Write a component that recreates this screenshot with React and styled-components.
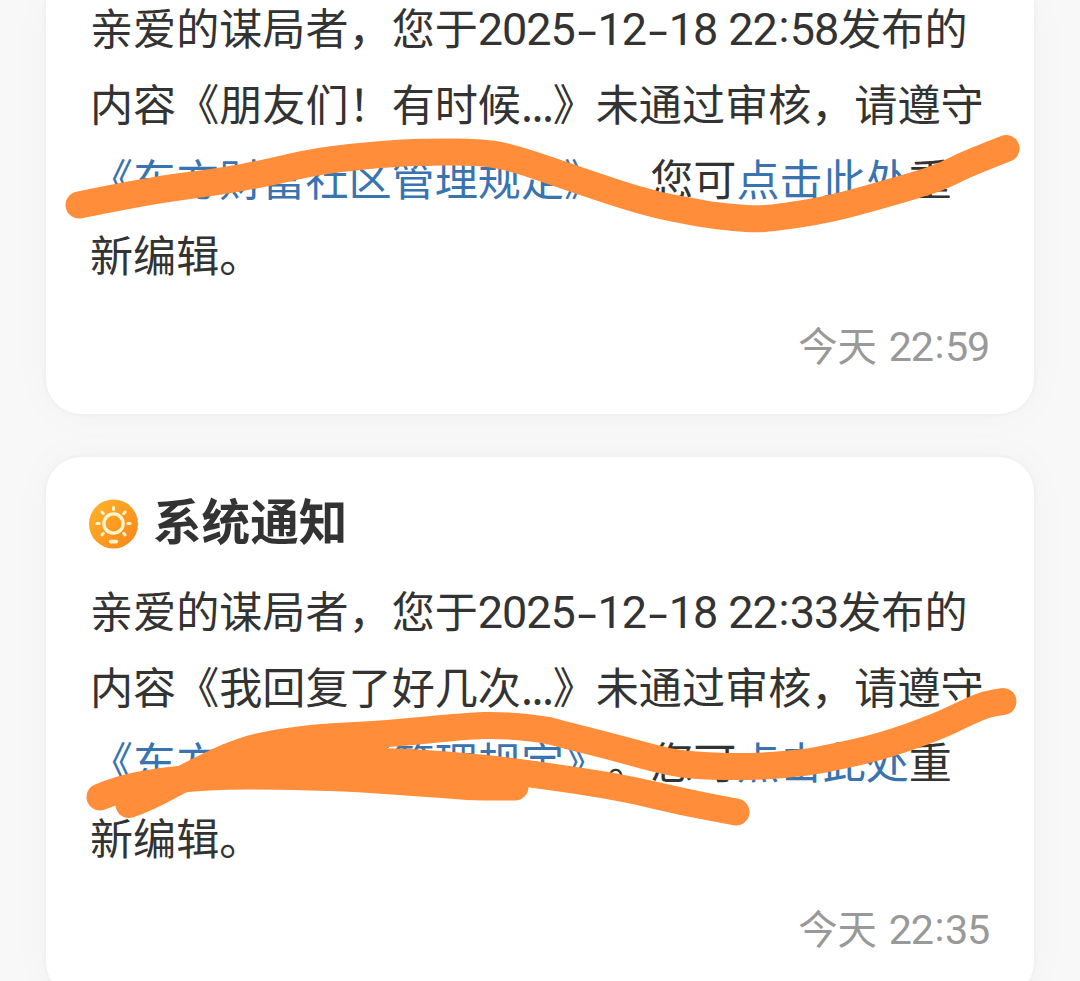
import React from 'react';
import styled, { createGlobalStyle } from 'styled-components';

const GlobalStyle = createGlobalStyle`
    * {
        box-sizing: border-box;
    }

    body {
        margin: 0;
        overflow: hidden;
        background: #f8f8f8;
        font-family: "Noto Sans CJK SC", sans-serif;
        text-spacing-trim: space-all;
    }
`;

const Feed = styled.main`
    position: relative;
    width: 1080px;
    height: 981px;
    padding: 0 46px;
    display: flex;
    flex-direction: column;
    gap: 43px;
    overflow: hidden;
`;

const Card = styled.article`
    flex: none;
    display: flex;
    flex-direction: column;
    height: ${props => props.$continued ? '414px' : '540px'};
    padding: ${props => props.$continued ? '0 44px' : '35px 44px 0'};
    border-radius: ${props => props.$continued ? '0 0 35px 35px' : '35px'};
    background: #fff;
    box-shadow: 0 0 5px rgba(0, 0, 0, 0.05), 0 0 44px rgba(0, 0, 0, 0.03);
`;

const CardHeader = styled.header`
    display: flex;
    align-items: center;
    height: 64px;
    gap: 15px;
    margin-bottom: 16px;
`;

const Title = styled.h2`
    margin: -10px 0 0;
    color: #333;
    font-size: 48.6px;
    font-weight: 700;
    line-height: 64px;
    white-space: nowrap;
`;

const Message = styled.p`
    width: 904px;
    margin: ${props => props.$continued ? '-11px 0 0' : '0'};
    color: #333;
    font-size: 43.1px;
    line-height: 75.7px;
`;

const Link = styled.a`
    color: #3973b0;
`;

const Digits = styled.span`
    font-family: Roboto, sans-serif;
    font-size: 45px;
    letter-spacing: -1.07px;
    word-spacing: 1px;
    line-height: 1;
`;

const Dash = styled.span`
    display: inline-block;
    width: 22.8px;
    line-height: 1;
    text-align: center;
    transform: translateY(2px) scaleX(1.55);
`;

const Colon = styled.span`
    display: inline-block;
    width: 0.29em;
    line-height: 1;
    text-align: center;
    transform: translateY(-3px);
`;

const Dots = styled.span`
    letter-spacing: -1.4px;
`;

const Time = styled.time`
    margin: 22px 1px 0 0;
    color: #999;
    font-size: 39.4px;
    line-height: 60px;
    text-align: right;
    white-space: nowrap;
    word-spacing: 3px;
`;

const Clock = styled.span`
    font-family: Roboto, sans-serif;
    font-size: 41.3px;
    letter-spacing: -1.15px;
    line-height: 1;
`;

const Marker = styled.svg`
    position: absolute;
    inset: 0;
    fill: none;
    stroke: #ff8d3a;
    stroke-width: 27;
    stroke-linecap: round;
    stroke-linejoin: round;
    pointer-events: none;
`;

const Sun = styled.svg`
    flex: none;
    margin-left: -1px;
`;

const notices = [
    { subject: '朋友们！有时候', sent: '22:58', received: '22:59', continued: true },
    { subject: '我回复了好几次', sent: '22:33', received: '22:35', continued: false },
];

// Freehand strokes, as the points the marker passed through
const strokes = [
    [[79, 205], [150, 190.5], [217, 182], [267, 173], [317, 161], [383, 154], [423, 152], [483, 152], [517, 159], [580, 181], [647, 203], [693, 212], [717, 216], [750, 219], [770, 218.5], [827, 210], [880, 195.5], [933, 180], [953, 171], [967, 164], [1006, 148.5]],
    [[129, 804.5], [145, 799], [190, 775], [226, 757], [260, 745.5], [314, 737.5], [387, 734], [467, 726], [500, 725], [543, 729], [565, 735], [617, 748], [667, 762], [700, 766], [753, 767], [803, 763], [830, 758], [880, 747], [937, 727], [970, 711], [987, 704], [1003, 701.5]],
    [[100, 797], [120, 789], [150, 783], [190, 778], [227, 776], [270, 776], [350, 778], [420, 783], [450, 785], [473, 787], [515, 787]],
    [[225, 769], [262, 774], [278, 768], [303, 764], [350, 761], [400, 762], [433, 764], [483, 768], [531, 774], [587, 782], [633, 790], [683, 802], [736, 812]],
    [[275, 756], [320, 750], [374, 748]],
];

// Curves through the midpoints so the joints stay soft
function strokePath(points) {
    let d = `M${points[0][0]} ${points[0][1]}`;
    for (let i = 1; i < points.length - 1; i++) {
        const [x, y] = points[i];
        const [nx, ny] = points[i + 1];
        d += ` Q${x} ${y} ${(x + nx) / 2} ${(y + ny) / 2}`;
    }
    const last = points[points.length - 1];
    return `${d} L${last[0]} ${last[1]}`;
}

const NoticeIcon = () => (
    <Sun width="49" height="50" viewBox="0 0 49 50">
        <defs>
            <linearGradient id="sun" x1="0" y1="0" x2="1" y2="1">
                <stop offset="0" stopColor="#fdb72e" />
                <stop offset="0.5" stopColor="#fd9c20" />
                <stop offset="1" stopColor="#f5851b" />
            </linearGradient>
        </defs>
        <circle cx="24.5" cy="25" r="24.5" fill="url(#sun)" />
        <g fill="none" stroke="#fff5cf" strokeWidth="3" strokeLinecap="round">
            <circle cx="24.5" cy="24.5" r="9.6" strokeWidth="3.4" />
            <path d="M24.5 8.4v2.2M13 13l1.3 1.5M36 13l-1.3 1.5M8 24.5h2.2M38.8 24.5H41M13 35.8l1.3-1.5M36 35.8l-1.3-1.5" />
            <path d="M21.7 42.6h5.6" strokeWidth="3.8" />
        </g>
    </Sun>
);

const HourMinute = ({ value }) => {
    const [hour, minute] = value.split(':');
    return <>{hour}<Colon>:</Colon>{minute}</>;
};

const Notice = ({ notice }) => (
    <Card $continued={notice.continued}>
        {!notice.continued && (
            <CardHeader>
                <NoticeIcon />
                <Title>系统通知</Title>
            </CardHeader>
        )}
        <Message $continued={notice.continued}>
            亲爱的谋局者，您于<Digits>2025<Dash>-</Dash>12<Dash>-</Dash>18 <HourMinute value={notice.sent} /></Digits>发布的<br />
            内容《{notice.subject}<Dots>...</Dots>》未通过审核，请遵守<br />
            <Link>《东方财富社区管理规定》</Link>。您可<Link>点击此处</Link>重<br />
            新编辑。
        </Message>
        <Time>今天 <Clock><HourMinute value={notice.received} /></Clock></Time>
    </Card>
);

export default function App() {
    return (
        <>
            <GlobalStyle />
            <Feed>
                {notices.map(notice => <Notice key={notice.sent} notice={notice} />)}
                <Marker width="1080" height="981" viewBox="0 0 1080 981">
                    {strokes.map((points, i) => <path key={i} d={strokePath(points)} />)}
                </Marker>
            </Feed>
        </>
    );
}
